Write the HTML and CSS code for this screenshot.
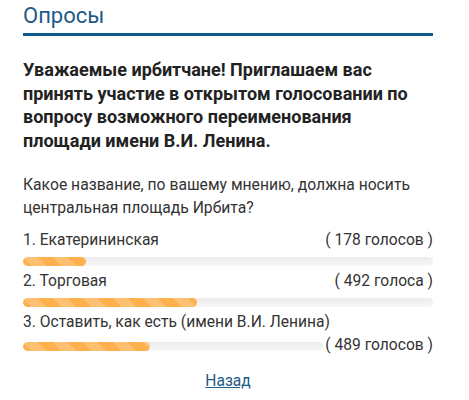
FILE: index.html
```html
<!DOCTYPE html>
<html lang="ru">
<head>
  <meta charset="UTF-8" />
  <meta name="viewport" content="width=device-width, initial-scale=1" />
  <title>Опросы</title>
  <link rel="stylesheet" href="styles.css">
</head>
<body>
  <div class="poll-box">
    <h2 class="poll-title">Опросы</h2>

    <h3 class="poll-lead">Уважаемые ирбитчане! Приглашаем вас принять участие в открытом голосовании по вопросу возможного переименования площади имени В.И. Ленина.</h3>

    <p class="poll-question">Какое название, по вашему мнению, должна носить центральная площадь Ирбита?</p>

    <div class="poll-results">
      <div class="poll-item">
        <div class="poll-head">
          <span class="poll-label">1. Екатерининская</span>
          <span class="poll-count">( 178 голосов )</span>
        </div>
        <div class="bar"><div class="bar-fill" style="width: 15.4%;"></div></div>
      </div>

      <div class="poll-item">
        <div class="poll-head">
          <span class="poll-label">2. Торговая</span>
          <span class="poll-count">( 492 голоса )</span>
        </div>
        <div class="bar"><div class="bar-fill" style="width: 42.4%;"></div></div>
      </div>

      <div class="poll-item">
        <div class="poll-head">
          <span class="poll-label">3. Оставить, как есть (имени В.И. Ленина)</span>
        </div>
        <div class="bar-row">
          <div class="bar"><div class="bar-fill" style="width: 42.2%;"></div></div>
          <span class="poll-count">( 489 голосов )</span>
        </div>
      </div>
    </div>

    <div class="poll-back"><a href="#">Назад</a></div>
  </div>
</body>
</html>
```

FILE: styles.css
```css
body {
  margin: 0;
  background: #fff;
  font-family: Roboto, "Liberation Sans", sans-serif;
  color: #333;
}

.poll-box {
  width: 410px;
  padding: 0 0 20px 23px;
}

.poll-title {
  margin: 0;
  padding-top: 2px;
  font-size: 22px;
  font-weight: 400;
  line-height: 28px;
  color: #1d5a86;
  border-bottom: 3px solid #0b5a8a;
  padding-bottom: 3px;
}

.poll-lead {
  margin: 22px 0 0;
  font-size: 18px;
  font-weight: 700;
  line-height: 23.5px;
  color: #222;
}

.poll-question {
  margin: 21px 0 0;
  font-size: 15.7px;
  line-height: 23px;
  color: #333;
}

.poll-results {
  margin-top: 10px;
}

.poll-item {
  margin-bottom: 4px;
}

.poll-head {
  display: flex;
  justify-content: space-between;
  font-size: 15.6px;
  line-height: 23px;
}

.bar-row {
  display: flex;
  align-items: center;
  font-size: 15.6px;
  line-height: 23px;
}

.bar-row .bar {
  flex: 1;
  margin-right: 2px;
}

.bar {
  height: 9px;
  margin: 5px 0 4px;
  border-radius: 5px;
  background: linear-gradient(#ececec, #f6f6f6);
  overflow: hidden;
}

.bar-fill {
  height: 100%;
  border-radius: 5px;
  background-color: #fdb04c;
  background-image: linear-gradient(45deg,
    rgba(255,255,255,.2) 25%, transparent 25%,
    transparent 50%, rgba(255,255,255,.2) 50%,
    rgba(255,255,255,.2) 75%, transparent 75%, transparent);
  background-size: 30px 30px;
}

.poll-back {
  margin-top: 15px;
  text-align: center;
  font-size: 15.6px;
}

.poll-back a {
  color: #1d5a86;
}
```
